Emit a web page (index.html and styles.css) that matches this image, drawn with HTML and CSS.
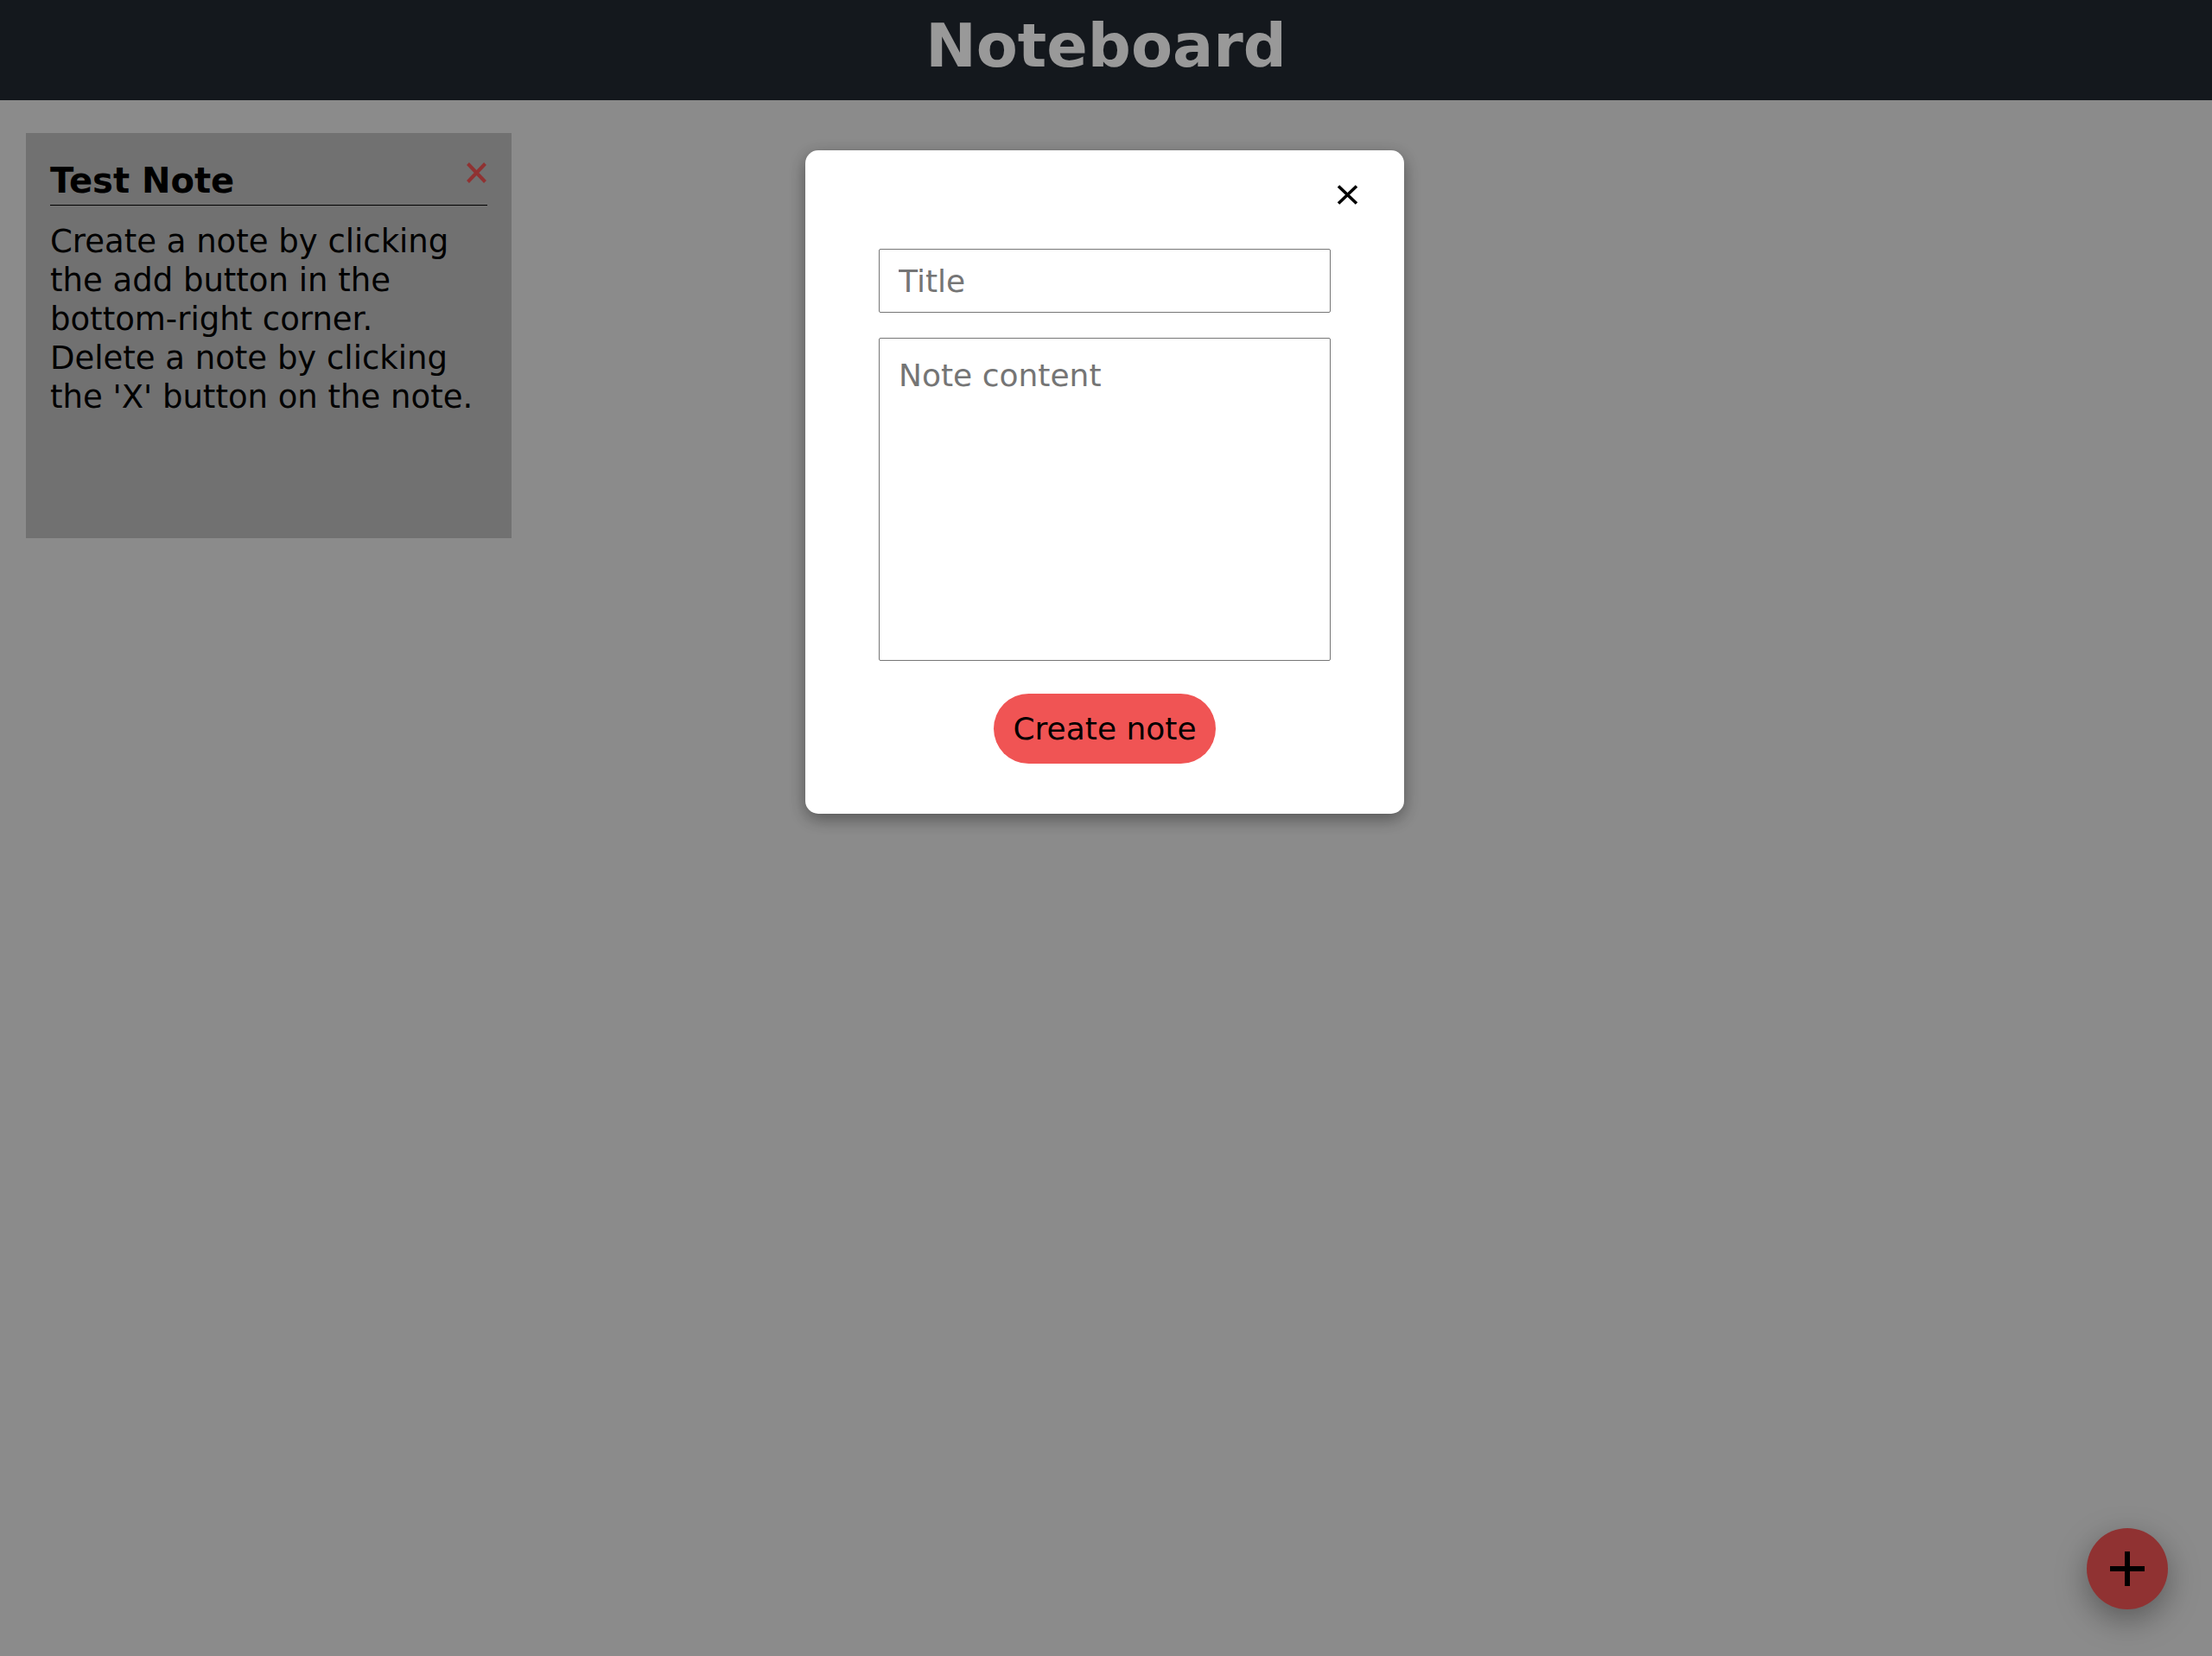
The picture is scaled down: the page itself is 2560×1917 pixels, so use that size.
FILE: index.html
```html
<!DOCTYPE html>
<html lang="en">
<head>
<meta charset="utf-8">
<title>Noteboard</title>
<link rel="stylesheet" href="styles.css">
</head>
<body>
<header class="topbar">
  <h1 class="brand">Noteboard</h1>
</header>
<main class="board">
  <article class="note">
    <div class="note-head">
      <h2 class="note-title">Test Note</h2>
      <button class="note-delete" aria-label="Delete note">
        <svg viewBox="0 0 25 26" width="25" height="26"><path d="M2.5 2.5 L22.5 23.5 M22.5 2.5 L2.5 23.5" stroke="currentColor" stroke-width="4" fill="none"/></svg>
      </button>
    </div>
    <p class="note-body">Create a note by clicking the add button in the bottom-right corner.<br>Delete a note by clicking the 'X' button on the note.</p>
  </article>
</main>
<button class="fab" aria-label="Add note">
  <svg viewBox="0 0 40 40" width="40" height="40"><path d="M20 0 V40 M0 20 H40" stroke="currentColor" stroke-width="6" fill="none"/></svg>
</button>
<div class="overlay">
  <div class="modal">
    <div class="modal-top">
      <button class="modal-close" aria-label="Close">
        <svg viewBox="0 0 25 23" width="25" height="23"><path d="M2 1.5 L23 21.5 M23 1.5 L2 21.5" stroke="currentColor" stroke-width="3.6" fill="none"/></svg>
      </button>
    </div>
    <form class="modal-form">
      <input class="field" type="text" placeholder="Title">
      <textarea class="field field-area" placeholder="Note content"></textarea>
      <button class="create" type="button">Create note</button>
    </form>
  </div>
</div>
</body>
</html>
```
FILE: styles.css
```css
* { box-sizing: border-box; }

html, body {
  margin: 0;
  padding: 0;
}

body {
  min-height: 100vh;
  background: #e8e8e8;
  font-family: "DejaVu Sans", "Liberation Sans", sans-serif;
  color: #000;
}

.topbar {
  height: 116px;
  background: #222831;
  display: flex;
  align-items: center;
  justify-content: center;
}

.brand {
  margin: 0 0 8px;
  font-size: 70px;
  font-weight: 700;
  color: #fff;
  line-height: 1.164;
}

.board {
  padding: 38px 30px;
  display: flex;
  flex-wrap: wrap;
  gap: 30px;
}

.note {
  width: 562px;
  height: 469px;
  background: #bcbcbc;
  padding: 32px 28px;
}

.note-head {
  display: flex;
  justify-content: space-between;
  align-items: flex-start;
  border-bottom: 1px solid #000;
  padding-bottom: 5px;
}

.note-title {
  margin: 0;
  font-size: 40px;
  line-height: 46px;
  font-weight: 700;
}

.note-delete {
  margin-top: 1px;
  padding: 0;
  border: none;
  background: none;
  color: #f05454;
  display: flex;
  cursor: pointer;
}

.note-body {
  margin: 19px 0 0;
  font-size: 37px;
  line-height: 45px;
}

.fab {
  position: fixed;
  right: 51px;
  bottom: 54px;
  width: 94px;
  height: 94px;
  border-radius: 50%;
  border: none;
  background: #f05454;
  color: #000;
  display: flex;
  align-items: center;
  justify-content: center;
  padding: 0;
  box-shadow: 0 12px 36px rgba(0, 0, 0, 0.35);
}

.overlay {
  position: fixed;
  inset: 0;
  background: rgba(0, 0, 0, 0.4);
  display: flex;
  justify-content: center;
  align-items: flex-start;
  padding-top: 174px;
}

.modal {
  width: 693px;
  height: 768px;
  margin-right: 3px;
  background: #fff;
  border-radius: 15px;
  padding: 40px 53px 58px;
  box-shadow: 0 6px 20px rgba(0, 0, 0, 0.4);
}

.modal-top {
  display: flex;
  justify-content: flex-end;
}

.modal-close {
  padding: 0;
  border: none;
  background: none;
  color: #000;
  display: flex;
  cursor: pointer;
}

.modal-form {
  margin-top: 51px;
  padding: 0 32px;
  display: flex;
  flex-direction: column;
  align-items: center;
}

.field {
  width: 100%;
  height: 74px;
  border: 1px solid #767676;
  border-radius: 2px;
  padding: 0 22px;
  font-family: inherit;
  font-size: 36px;
  color: #000;
  background: #fff;
  margin: 0;
}

.field::placeholder {
  color: #757575;
}

.field-area {
  margin-top: 29px;
  height: 374px;
  padding: 22px;
  line-height: normal;
  resize: none;
  display: block;
}

.create {
  margin-top: 38px;
  height: 81px;
  padding: 0 22px;
  border: none;
  border-radius: 999px;
  background: #f05454;
  color: #000;
  font-family: inherit;
  font-size: 36px;
  cursor: pointer;
}
```
